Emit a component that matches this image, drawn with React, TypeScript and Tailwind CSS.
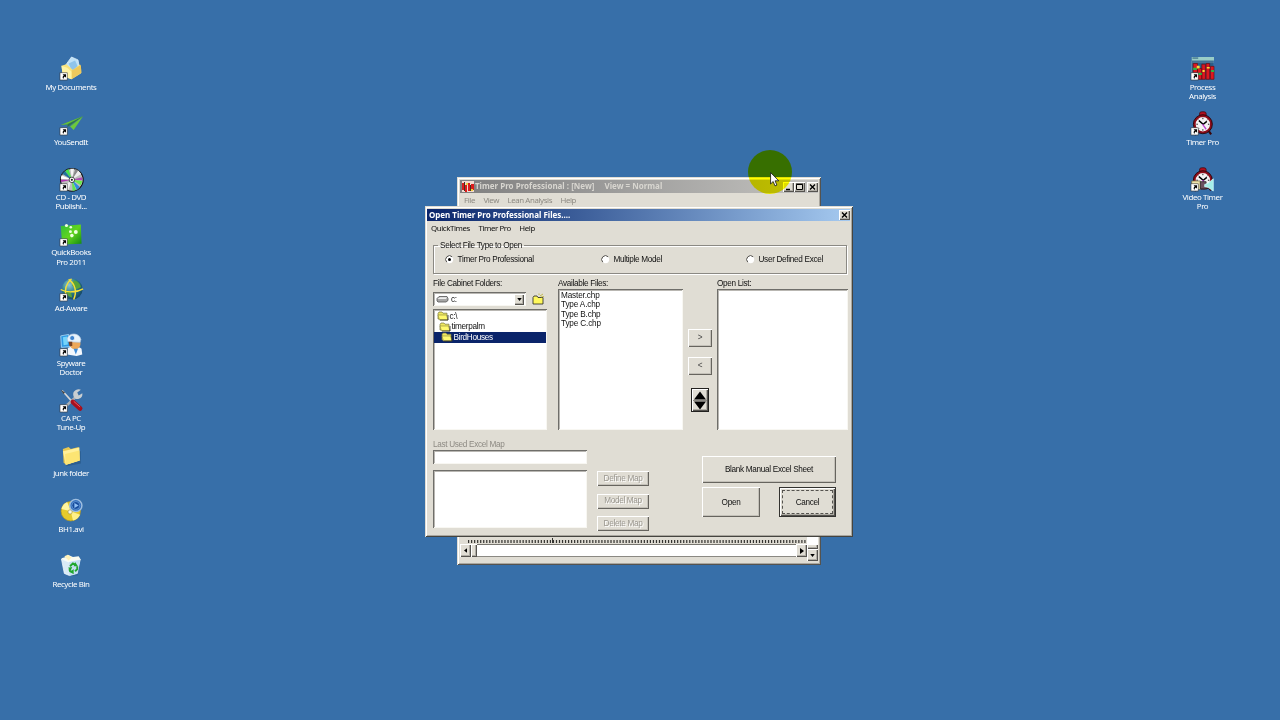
import type { ReactNode } from "react";

const Shortcut = () => (
  <g>
    <rect x="0" y="22" width="10" height="10" fill="#fff" stroke="#333" strokeWidth=".8" />
    <path d="M3.600 24h4.800v4.800l-1.600-1.600c-1.400.8-1.900 1.800-2 3.300-1.800-1.800-1.200-4 .5-4.800z" fill="#000" />
  </g>
);

const Icon = ({ children, shortcut = true }: { children: ReactNode; shortcut?: boolean }) => (
  <svg viewBox="0 0 32 32" className="block h-[23px] w-[23px] overflow-visible">
    {children}
    {shortcut && <Shortcut />}
  </svg>
);

const MyDocs = () => (
  <Icon>
    <path d="M5 13 17 1l9 6 5 9-9 10-13-3z" fill="#27537f" opacity=".35" />
    <path d="M8 11 16 0l9 4 2 10-9 9z" fill="#bfe2f8" stroke="#e8f6ff" />
    <path d="m12 9 9-4 4 9-8 6z" fill="#8fc4ea" />
    <path d="m2 12 7-2 9 8 10-8 1 13-13 8-12-4z" fill="#f9e27a" />
    <path d="m16 19 13-8 1 11-14 9z" fill="#eec95c" />
    <path d="m2 12 8 3 6 5v11L4 26z" fill="#fff3a3" />
  </Icon>
);

const YouSendIt = () => (
  <Icon>
    <path d="M1 18 32 6 12 20 9 17z" fill="#4aa33a" />
    <path d="M32 6 19 25l-5-5z" fill="#6cc83c" />
    <path d="M32 6 10 21l1-4z" fill="#2c6f58" />
    <path d="m1 18 31-12L9 17z" fill="#69c23e" />
  </Icon>
);

const Disc = () => (
  <Icon>
    <circle cx="16.500" cy="16.500" r="15.800" fill="#bdbdbd" stroke="#111" strokeWidth="1.500" />
    <path d="M16.500 16.500 7 4l5-2.500z" fill="#48e04c" />
    <path d="m16.500 16.500-2-15.500h5z" fill="#f5f5f5" />
    <path d="m16.500 16.500 5-15 4 2z" fill="#8a8a8a" />
    <path d="m16.500 16.500 9-13 4 5z" fill="#eee" />
    <path d="M16.500 16.500 31 13v4z" fill="#b24ab2" />
    <path d="M16.500 16.500 31 18l-2 6z" fill="#6aec4b" />
    <path d="m16.500 16.500 11 10-4 4z" fill="#2d8de0" />
    <path d="m16.500 16.500 6 14-5 1.500z" fill="#60e455" />
    <path d="M16.500 16.500 1 15l1-5z" fill="#fff" />
    <path d="m16.500 16.500-15 3-.5-3z" fill="#b036b0" />
    <path d="M16.500 16.500 3 8l4-4z" fill="#25709c" />
    <path d="m16.500 16.500-5 14L4 26z" fill="#eee" />
    <circle cx="16.500" cy="16.500" r="3.800" fill="#fff" stroke="#111" />
    <circle cx="16.500" cy="16.500" r="1.500" fill="#222" />
  </Icon>
);

const QuickBooks = () => (
  <Icon>
    <defs>
      <linearGradient id="qb" x1="0" y1="0" x2="1" y2="1">
        <stop offset="0" stopColor="#2fbf3c" />
        <stop offset=".5" stopColor="#62d51f" />
        <stop offset="1" stopColor="#128a12" />
      </linearGradient>
    </defs>
    <path d="M1 4 29 2l1 27-27 1z" fill="url(#qb)" />
    <circle cx="9" cy="3.500" r="2.200" fill="#efffe0" />
    <circle cx="15" cy="6" r="1.800" fill="#efffe0" />
    <circle cx="14.500" cy="12" r="2" fill="#efffe0" />
    <circle cx="22" cy="12.500" r="2.700" fill="#efffe0" />
    <circle cx="16.500" cy="17.500" r="2.500" fill="#efffe0" />
  </Icon>
);

const AdAware = () => (
  <Icon>
    <defs>
      <radialGradient id="aa" cx=".35" cy=".3" r=".8">
        <stop offset="0" stopColor="#8fc6d8" />
        <stop offset=".5" stopColor="#2a7c86" />
        <stop offset="1" stopColor="#123c60" />
      </radialGradient>
    </defs>
    <circle cx="17" cy="15.500" r="14.500" fill="url(#aa)" />
    <path d="M19 3c6 1 10 6 10 10l-7 3-5-6zM8 18l7 1 2 8c-5-1-8-4-9-9z" fill="#57a338" />
    <path d="M1 16c8 5 23 4 31-1M12 2c9 6 12 17 7 28M16 1C8 8 6 17 9 26" fill="none" stroke="#f6df38" strokeWidth="2" />
  </Icon>
);

const Spyware = () => (
  <Icon>
    <path d="m1 4 11-2 2 17-12 1z" fill="#2f9ae4" stroke="#bde7ff" />
    <path d="m4 6 6-1 1 11-6 1z" fill="#75d4fa" />
    <path d="M11 21c3-3 15-3 19 1l1 8-8 2-13-2z" fill="#f3f7fc" />
    <ellipse cx="21" cy="15" rx="7.500" ry="8" fill="#eda85a" />
    <path d="M10 8C12-1 27-1 29 9l-1 4-17-1z" fill="#e9f3fb" stroke="#b5c9df" />
    <circle cx="17" cy="7" r="3.500" fill="#3e84cf" stroke="#fff" />
    <path d="M12 12h5v6h-4z" fill="#784224" />
    <path d="m19 22 3 8 3-8z" fill="#3d8bd8" />
  </Icon>
);

const Tools = () => (
  <Icon>
    <path d="m3 2 16 18" stroke="#d7d7d7" strokeWidth="2.200" />
    <path d="m1 1 6 4-2 2z" fill="#444" />
    <path d="M7 25 22 11" stroke="#a9afb5" strokeWidth="3.500" />
    <path d="M19 4c2-3 7-5 10-3l-5 4 2 4 5-3c1 5-3 8-7 8-4 0-7-5-5-10z" fill="#c9ced1" />
    <path d="m18 18 10 9" stroke="#a80f1c" strokeWidth="6.500" strokeLinecap="round" />
    <path d="m19 17 9 8" stroke="#ef6a72" strokeWidth="1.200" />
  </Icon>
);

const JunkFolder = () => (
  <Icon shortcut={false}>
    <path d="m6 8 23 2v17L9 31z" fill="#1c456f" opacity=".4" />
    <path d="M4 7 12 4l3 3 11-3 2 19-19 6-4-3z" fill="#e9c851" />
    <path d="m4 10 23-5v18L8 29z" fill="#fff09a" />
    <path d="m7 14 20-5v14L8 29z" fill="#fce573" />
  </Icon>
);

const Video = () => (
  <Icon shortcut={false}>
    <circle cx="15" cy="17" r="13.500" fill="#e5ca2b" stroke="#b89b20" />
    <path d="M15 17 2 14c1-5 4-8 8-10z" fill="#fff6a1" />
    <path d="m15 17 13 5c-2 4-5 7-10 8z" fill="#fff189" />
    <circle cx="14" cy="18" r="3" fill="#f7f7e5" stroke="#aa9a40" />
    <circle cx="22" cy="9" r="8.500" fill="#3570bd" stroke="#9fbfe0" strokeWidth="2" />
    <circle cx="22" cy="9" r="5.500" fill="#174c9d" stroke="#6fa3dd" />
    <path d="m20 5.500 6 3.500-6 3.500z" fill="#8fc0f5" />
  </Icon>
);

const Recycle = () => (
  <Icon shortcut={false}>
    <path d="m5 7 22 1-2 22-14 1z" fill="#1b4674" opacity=".3" />
    <path d="m2 6 6-2 3-3 7 3 8-1 3 5-5 4-17-1z" fill="#f9fbf0" />
    <path d="m6 3 5-2 5 4-4 4z" fill="#fff2b8" />
    <path d="m2 7 10 4 16-3-4 19-11 3-7-3z" fill="#d8eaf7" stroke="#f5fbff" />
    <path d="m13 11 15-3-4 19-11 3z" fill="#c4def2" />
    <path d="m14 17 4-4 4 2m2 2v4l-3 3m-3 1-4-1-1-3" fill="none" stroke="#20a72c" strokeWidth="2.600" />
    <path d="m21 11 4 6-6 0zM19 21v7l-5-3zM11 19l6-1-2 5z" fill="#20a72c" />
  </Icon>
);

const ChartIcon = () => (
  <Icon>
    <rect x="1" y="1" width="30" height="30" fill="#2c5f88" />
    <rect x="1" y="0" width="31" height="5" fill="#99cdc7" />
    <rect x="2" y=".5" width="8" height="2" fill="#4c7d91" />
    <path d="M2 7h30M1 5v17" stroke="#7ea3b4" strokeWidth=".9" />
    <path d="M3 9h6v13H3zM9 16h6v15H9zM15 10h5v21h-5zM21 9h5v22h-5zM27 13h5v18h-5z" fill="#dd1720" stroke="#671116" />
    <path d="M3 15h5v3H3zM10 22h5v3h-5zM28 18h4v3h-4z" fill="#27b844" />
    <path d="M8 12h4v4H8zM16 18h3v3h-3zM22 14h4v2h-4z" fill="#f9db37" />
  </Icon>
);

const Clock = () => (
  <>
    <path d="m8 27-3 5m20-5 3 4" stroke="#3a0508" strokeWidth="3" />
    <path d="M12 1.500c0-2.500 9-2.500 9 0V6h-9z" fill="#b00f20" stroke="#3a0508" />
    <circle cx="16.500" cy="17" r="11.500" fill="#f5f3f5" stroke="#8d0c1a" strokeWidth="3" />
    <circle cx="16.500" cy="17" r="13.200" fill="none" stroke="#2a0306" strokeWidth="1.300" />
    <path d="M16.500 8v2M16.500 24v2M7.500 17h2M23.500 17h2M10 10.500l1 1M23 10.500l-1 1M10 24l1-1" stroke="#111" strokeWidth="1.300" />
    <path d="m11 12 6 5 5-4" fill="none" stroke="#000" strokeWidth="2" />
    <path d="m16 17 5 7" stroke="#bc3fd0" strokeWidth="1.800" />
  </>
);

const VideoClock = () => (
  <Icon>
    <Clock />
    <path d="M1 18h12v12H1z" fill="#efe4ac" stroke="#6f643e" />
    <path d="M13 19h8v10h-8z" fill="#6c5160" stroke="#222" />
    <path d="M8 30h14v3H8z" fill="#376fa9" />
    <path d="m19 23 5-2 7-6v17l-7-5-5-1z" fill="#a5eee8" stroke="#d6ffff" />
  </Icon>
);

const DesktopItem = ({ icon, lines }: { icon: ReactNode; lines: string[] }) => (
  <div className="flex h-[55.250px] flex-col items-center">
    {icon}
    <div className="mt-[2.500px] flex flex-col items-center">
      {lines.map((l) => (
        <span key={l} className="h-[9.300px] whitespace-nowrap font-['Noto_Sans'] text-[7.900px] leading-[9.300px] tracking-[-0.400px] text-white">
          {l}
        </span>
      ))}
    </div>
  </div>
);

const raised = "bg-[#e0ddd4] shadow-[inset_1px_1px_0_#fff,inset_-1px_-1px_0_#55534f,inset_-2px_-2px_0_#b0ada5]";
const raisedSoft = "bg-[#e0ddd4] shadow-[inset_1px_1px_0_#fff,inset_-1px_-1px_0_#66645e,inset_-2px_-2px_0_#c4c1b9]";
const sunken = "bg-white shadow-[inset_1px_1px_0_#6f6e6a,inset_-1px_-1px_0_#f8f7f2,inset_2px_2px_0_#b9b7b2]";
const sans = "font-['Liberation_Sans'] text-[8.200px] leading-[9.200px] tracking-[-0.310px] whitespace-nowrap";
const tahoma = "font-['Noto_Sans'] text-[7.900px] leading-[10px] tracking-[-0.420px] whitespace-nowrap";

const CaptionButton = ({ kind }: { kind: "min" | "max" | "close" }) => (
  <div className={`h-[10px] w-[11px] ${raised}`}>
    <svg viewBox="0 0 11 10" className="block h-full w-full">
      {kind === "min" && <path d="M3 7.500h4" stroke="#000" strokeWidth="1.500" />}
      {kind === "max" && <path d="M2.500 2.500h6v5h-6zM2 2h7" fill="none" stroke="#000" />}
      {kind === "close" && <path d="m3 2.500 5 5m0-5-5 5" stroke="#000" strokeWidth="1.400" />}
    </svg>
  </div>
);

const Folder = () => (
  <svg viewBox="0 0 12 10" className="block h-[10px] w-[12px]">
    <path d="M1 2.500 2 1h3l1 1.200h4V8H1z" fill="#eee760" stroke="#77743b" strokeWidth=".7" />
    <path d="M1 4h8.500l1.500 5H2.500z" fill="#fff96e" stroke="#86833b" strokeWidth=".6" />
    <path d="M11 4v5H3" fill="none" stroke="#222" strokeWidth=".8" />
  </svg>
);

const Radio = ({ on = false, label }: { on?: boolean; label: string }) => (
  <div className="flex items-center gap-[3.500px]">
    <svg viewBox="0 0 9 9" className="h-[9px] w-[9px]">
      <circle cx="4.500" cy="4.500" r="3.700" fill="#fff" />
      <path d="M1.800 7.200A3.700 3.700 0 0 1 7.200 1.800" fill="none" stroke="#55534f" strokeWidth="1" />
      {on && <circle cx="4.500" cy="4.500" r="1.500" fill="#000" />}
    </svg>
    <span className={sans}>{label}</span>
  </div>
);

const Button = ({ label, size }: { label: string; size: string }) => (
  <button className={`flex items-center justify-center ${raisedSoft} ${sans} ${size}`}>{label}</button>
);

const BackWindow = () => (
  <div className="absolute left-[457px] top-[177px] flex h-[388px] w-[364px] flex-col justify-between bg-[#e0ddd4] p-[3px] shadow-[inset_1px_1px_0_#e0ddd4,inset_-1px_-1px_0_#55534f,inset_2px_2px_0_#fff,inset_-2px_-2px_0_#aaa79f]">
    <div>
      <div className="flex h-[13px] items-center bg-linear-to-r from-[#808080] to-[#c4c3c0]">
        <svg viewBox="0 0 12 11" className="ml-[2px] mr-[1px] h-[11px] w-[12px]">
          <path d="M0 0h12v11H0z" fill="#f2d9cf" />
          <path d="M0 2h2v7H0zM3 4h2v7H3zM6 2h2v8H6zM9 3h3v6H9z" fill="#dc1c1c" />
          <path d="M2 1h1v9H2zM8 4h1v6H8z" fill="#432" />
          <path d="M4 2h2v2H4zM9 8h2v2H9z" fill="#f2d03b" />
        </svg>
        <span className="h-[13px] whitespace-pre font-['Noto_Sans'] text-[8px] font-bold leading-[12px] text-[#d8d6d0]">Timer Pro Professional : [New]</span>
        <span className="ml-[10px] h-[13px] whitespace-pre font-['Noto_Sans'] text-[8px] font-bold leading-[12px] text-[#d8d6d0]">View = Normal</span>
        <div className="ml-auto flex">
          <CaptionButton kind="min" />
          <CaptionButton kind="max" />
          <div className="ml-[2px]"><CaptionButton kind="close" /></div>
        </div>
      </div>
      <div className={`mt-[1.500px] flex gap-[8.500px] pl-[4px] text-[#8d8a83] ${tahoma}`}>
        <span>File</span><span>View</span><span>Lean Analysis</span><span>Help</span>
      </div>
    </div>
    <div className="flex h-[27px] items-start">
      <div className="w-[347px]">
        <svg viewBox="0 0 347 9" className="block h-[9px] w-[347px]">
          <path d="M8 6.500h338" stroke="#33322f" strokeWidth="3" strokeDasharray="1.200 1.830" />
          <path d="M92.500 3v5" stroke="#33322f" />
        </svg>
        <div className="flex h-[13px] bg-white shadow-[inset_0_1px_0_#77756f,inset_0_-1px_0_#8b8983]">
          <div className={`flex w-[11px] items-center justify-center ${raised}`}>
            <svg viewBox="0 0 4 6" className="h-[5px] w-[3px]"><path d="M4 0v6L0 3z" /></svg>
          </div>
          <div className={`w-[6px] ${raised}`} />
          <div className={`ml-auto flex w-[11px] items-center justify-center ${raised}`}>
            <svg viewBox="0 0 4 6" className="h-[6px] w-[4px]"><path d="M0 0v6l4-3z" /></svg>
          </div>
        </div>
      </div>
      <div className="flex h-[26px] w-[11px] flex-col bg-white">
        <div className={`mt-[9px] h-[5px] ${raised}`} />
        <div className={`flex flex-1 items-center justify-center ${raised}`}>
          <svg viewBox="0 0 6 4" className="h-[3px] w-[5px]"><path d="M0 0h6L3 4z" /></svg>
        </div>
      </div>
    </div>
  </div>
);

const Dialog = () => (
  <div className="absolute left-[425px] top-[206px] h-[331px] w-[428px] bg-[#e0ddd4] p-[3px] pl-[2px] text-[#111] shadow-[inset_1px_1px_0_#e0ddd4,inset_-1px_-1px_0_#45443f,inset_2px_2px_0_#fff,inset_-2px_-2px_0_#aaa79f]">
    <div className="flex h-[12px] items-center bg-linear-to-r from-[#0a246a] to-[#a6caf0] pl-[2px]">
      <span className="h-[12px] whitespace-nowrap font-['Noto_Sans'] text-[8px] font-bold leading-[11px] tracking-[-0.030px] text-white">Open Timer Pro Professional Files....</span>
      <div className="ml-auto"><CaptionButton kind="close" /></div>
    </div>
    <div className={`mt-[2px] flex h-[10px] gap-[8.500px] pl-[4px] ${tahoma}`}>
      <span>QuickTimes</span><span>Timer Pro</span><span>Help</span>
    </div>
    <div className="pl-[6px] pr-[2px]">
      <fieldset className="mr-[1px] mt-[8px] h-[33px] border border-[#8b8983] pl-[4px] shadow-[1px_1px_0_#fff,inset_1px_1px_0_#fff]">
        <legend className={`-mt-px h-[9px] px-[2px] ${sans}`}>Select File Type to Open</legend>
        <div className="grid grid-cols-[156px_145px_90px] pl-[7px] pt-[5px] leading-none">
          <Radio on label="Timer Pro Professional" />
          <Radio label="Multiple Model" />
          <Radio label="User Defined Excel" />
        </div>
      </fieldset>
      <div className="mt-[5px] flex">
        <div className="w-[114px]">
          <div className={sans}>File Cabinet Folders:</div>
          <div className="mt-[4px] flex h-[14px] items-center">
            <div className={`flex h-[14px] w-[93px] items-center p-[2px] ${sunken}`}>
              <svg viewBox="0 0 13 8" className="ml-[1px] h-[8px] w-[13px]">
                <path d="m1 3.500 2-2h8l1 2v2l-2 1.500H2L1 6z" fill="#a6a6a6" stroke="#555" strokeWidth=".8" />
                <path d="m2 3.500 2-1.200h7L10 4H2z" fill="#eee" />
              </svg>
              <span className={`ml-[2px] mt-[1px] ${sans}`}>c:</span>
              <div className={`ml-auto flex h-[11px] w-[10px] items-center justify-center ${raised}`}>
                <svg viewBox="0 0 6 4" className="h-[3px] w-[5px]"><path d="M0 0h6L3 4z" /></svg>
              </div>
            </div>
            <svg viewBox="0 0 12 12" className="ml-[6px] h-[12px] w-[12px]">
              <path d="M1 4.500 2 3h3l1 1.500h5V11H1z" fill="#fff85c" stroke="#222" strokeWidth=".8" />
              <path d="m8 3 3-2M7 2V.500M9 4l3-.5" stroke="#bcb32c" strokeWidth=".8" />
            </svg>
          </div>
          <div className={`mt-[3px] h-[121px] pl-[1px] pr-[1px] pt-[2px] ${sunken} ${sans}`}>
            <div className="flex h-[10.500px] items-center gap-[1px] pl-[2.500px]"><Folder />c:\</div>
            <div className="flex h-[10.500px] items-center gap-[1px] pl-[4.500px]"><Folder />timerpalm</div>
            <div className="flex h-[10.500px] items-center gap-[1px] bg-[#0a246a] pl-[6.500px] text-white"><Folder />BirdHouses</div>
          </div>
        </div>
        <div className="ml-[11px] w-[125px]">
          <div className={sans}>Available Files:</div>
          <div className={`mt-[1px] h-[141px] pl-[3px] pt-[2px] ${sunken} font-['Liberation_Sans'] text-[8.200px] leading-[9.200px] tracking-[-0.150px]`}>
            <div>Master.chp</div><div>Type A.chp</div><div>Type B.chp</div><div>Type C.chp</div>
          </div>
        </div>
        <div className="flex w-[34px] flex-col items-center pt-[50px]">
          <Button label=">" size="h-[18px] w-[24px] text-[#444]" />
          <div className="h-[10px]" />
          <Button label="<" size="h-[18px] w-[24px] text-[#444]" />
          <div className={`mt-[13px] flex h-[24px] w-[18px] flex-col items-center justify-center gap-px border border-[#22211f] ${raised}`}>
            <svg viewBox="0 0 14 19" className="h-[19px] w-[14px]">
              <path d="m7 .5 6 8H1zM1 10.500h12L7 18.500z" />
              <path d="M0 9.500h14" stroke="#8b8983" />
            </svg>
          </div>
        </div>
        <div className="w-[131px]">
          <div className={sans}>Open List:</div>
          <div className={`mt-[1px] h-[141px] ${sunken}`} />
        </div>
      </div>
      <div className="mt-[10px] flex">
        <div className="w-[154px]">
          <div className={`text-[#8d8a83] ${sans}`}>Last Used Excel Map</div>
          <div className={`mt-[1px] h-[14px] ${sunken}`} />
          <div className={`mt-[6px] h-[58px] ${sunken}`} />
        </div>
        <div className="ml-[10px] flex flex-col gap-[7.800px] pt-[30.500px] text-[#9a978f]">
          <Button label="Define Map" size="h-[15px] w-[52px] [text-shadow:1px_1px_0_#fff]" />
          <Button label="Model Map" size="h-[15px] w-[52px] [text-shadow:1px_1px_0_#fff]" />
          <Button label="Delete Map" size="h-[15px] w-[52px] [text-shadow:1px_1px_0_#fff]" />
        </div>
        <div className="ml-[53px] flex w-[134px] flex-col gap-[4px] pt-[16px]">
          <Button label="Blank Manual Excel Sheet" size="h-[27px] w-[134px]" />
          <div className="flex justify-between">
            <Button label="Open" size="h-[30px] w-[58px]" />
            <div className={`flex h-[30px] w-[57px] border border-[#33322f] p-[2px] ${raised}`}>
              <button className={`flex-1 border border-dashed border-[#55534f] ${sans}`}>Cancel</button>
            </div>
          </div>
        </div>
      </div>
    </div>
  </div>
);

export default function App() {
  return (
    <div className="relative h-[720px] w-[1280px] overflow-hidden bg-[#376fa9]">
      <div className="flex justify-between pl-[31px] pr-[37.500px] pt-[57px]">
        <div className="flex w-[80px] flex-col">
          <DesktopItem icon={<MyDocs />} lines={["My Documents"]} />
          <DesktopItem icon={<YouSendIt />} lines={["YouSendIt"]} />
          <DesktopItem icon={<Disc />} lines={["CD - DVD", "Publishi..."]} />
          <DesktopItem icon={<QuickBooks />} lines={["QuickBooks", "Pro 2011"]} />
          <DesktopItem icon={<AdAware />} lines={["Ad-Aware"]} />
          <DesktopItem icon={<Spyware />} lines={["Spyware", "Doctor"]} />
          <DesktopItem icon={<Tools />} lines={["CA PC", "Tune-Up"]} />
          <DesktopItem icon={<JunkFolder />} lines={["junk folder"]} />
          <DesktopItem icon={<Video />} lines={["BH1.avi"]} />
          <DesktopItem icon={<Recycle />} lines={["Recycle Bin"]} />
        </div>
        <div className="flex w-[80px] flex-col">
          <DesktopItem icon={<ChartIcon />} lines={["Process", "Analysis"]} />
          <DesktopItem icon={<Icon><Clock /></Icon>} lines={["Timer Pro"]} />
          <DesktopItem icon={<VideoClock />} lines={["Video Timer", "Pro"]} />
        </div>
      </div>
      <BackWindow />
      <Dialog />
      <div className="absolute left-[748px] top-[150px] h-[44px] w-[44px] rounded-full bg-[#ffff00] mix-blend-multiply" />
      <svg viewBox="0 0 12 19" className="absolute left-[770px] top-[172px] h-[15px] w-[9.500px]">
        <path d="M.7.7v14.500l3.300-3.200 2.300 5.600 2.400-1-2.300-5.400h4.700z" fill="#fff" stroke="#111" strokeWidth="1" />
      </svg>
    </div>
  );
}
